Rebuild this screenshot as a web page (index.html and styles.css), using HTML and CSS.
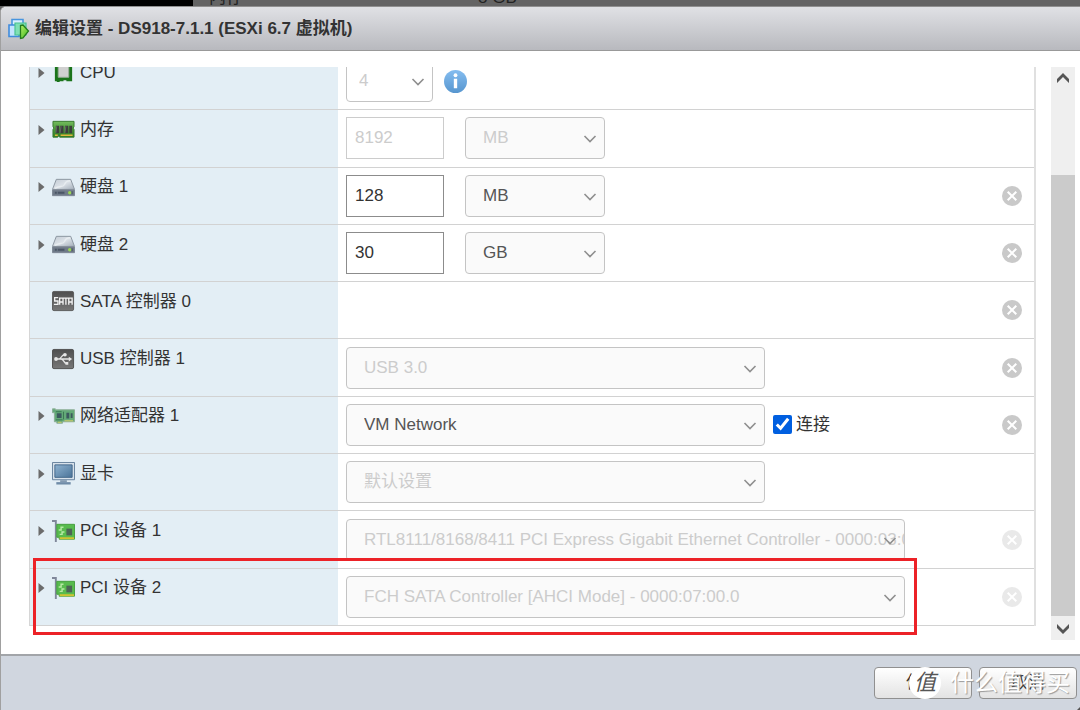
FILE: index.html
```html
<!DOCTYPE html>
<html lang="zh-CN">
<head>
    <meta charset="UTF-8">
    <meta name="viewport" content="width=device-width, initial-scale=1.0">
    <title>编辑设置 - DS918-7.1.1</title>
    <link rel="stylesheet" href="styles.css">
</head>
<body>
    <!-- Shared icons -->
    <svg class="sprite" aria-hidden="true">
        <defs>
            <linearGradient id="disk-fill" x1="0" y1="0" x2="1" y2="1">
                <stop offset="0" stop-color="#c3cbd4"/>
                <stop offset="0.5" stop-color="#dbe1e7"/>
                <stop offset="1" stop-color="#a5afba"/>
            </linearGradient>
            <linearGradient id="dark-fill" x1="0" y1="0" x2="0" y2="1">
                <stop offset="0" stop-color="#4f4f4f"/>
                <stop offset="1" stop-color="#777"/>
            </linearGradient>
            <linearGradient id="ram-fill" x1="0" y1="0" x2="0" y2="1">
                <stop offset="0" stop-color="#74bb5e"/>
                <stop offset="0.5" stop-color="#4c9a3b"/>
                <stop offset="1" stop-color="#2f7d22"/>
            </linearGradient>
            <linearGradient id="screen-fill" x1="0" y1="0" x2="1" y2="1">
                <stop offset="0" stop-color="#8fb3d1"/>
                <stop offset="1" stop-color="#4a7398"/>
            </linearGradient>
            <linearGradient id="info-fill" x1="0" y1="0" x2="0" y2="1">
                <stop offset="0" stop-color="#85bdf0"/>
                <stop offset="1" stop-color="#5796cf"/>
            </linearGradient>
            <linearGradient id="play-fill" x1="0" y1="0" x2="1" y2="1">
                <stop offset="0" stop-color="#b4f06a"/>
                <stop offset="1" stop-color="#3fb81c"/>
            </linearGradient>
        </defs>
        <symbol id="arrow" viewBox="0 0 7 12">
            <path d="M0.5 1v10l6-5z" fill="#6b6b6b"/>
        </symbol>
        <symbol id="chevron" viewBox="0 0 14 10">
            <path d="M1.5 2l5.500 5.500L12.500 2" fill="none" stroke="#8f8f8f" stroke-width="1.600"/>
        </symbol>
        <symbol id="cross" viewBox="0 0 20 20">
            <circle cx="10" cy="10" r="10" fill="#c9c9c9"/>
            <path d="M5.700 5.700l8.600 8.600M14.300 5.700l-8.600 8.600" stroke="#fff" stroke-width="2"/>
        </symbol>
        <symbol id="cpu" viewBox="0 0 24 24">
            <path d="M3 2h18v19h-6v-1h-3v1H8v1H5v-1H3z" fill="#1b741b"/>
            <path d="M6.500 4h11v13h-11z" fill="#d0d0d0"/>
            <path d="M6.500 4h11v13h-11z" fill="none" stroke="#9aae9a"/>
        </symbol>
        <symbol id="ram" viewBox="0 0 24 24">
            <path d="M1 3.500h22V9l-1 1.500 1 1.500V20H8l-1-1.500L6 20H1v-8l1-1.500L1 9z" fill="url(#ram-fill)" stroke="#397a30"/>
            <path d="M4 8h3.500v8H4zM8.500 8H12v8H8.500zM13.500 8H17v8h-3.500zM18 8h3v8h-3z" fill="#3a3f3a"/>
            <path d="M5 8.500l-1 7M9.500 8.500l-1 7M14.500 8.500l-1 7" stroke="#666"/>
            <path d="M3 18h3M9 18h12.500" stroke="#dfb63b" stroke-width="1.600"/>
        </symbol>
        <symbol id="disk" viewBox="0 0 24 24">
            <path d="M4.500 3.500h15L23.500 14H0.500z" fill="url(#disk-fill)" stroke="#8a949f"/>
            <path d="M3 13c5-3 9-1 10-4s3-4 6-4" fill="none" stroke="#eef2f5" stroke-width="1.500" opacity="0.700"/>
            <path d="M0.500 14.500h23v6h-23z" fill="#6f7a88" stroke="#7d8793"/>
            <path d="M3 17.500h2M6 17.500h7" stroke="#4b5665" stroke-width="2"/>
            <circle cx="18.500" cy="17.500" r="1.800" fill="#9ad455"/>
            <path d="M21 16v3" stroke="#47515d"/>
        </symbol>
        <symbol id="sata" viewBox="0 0 24 24">
            <rect x="0.500" y="1.500" width="22" height="20" rx="1.500" fill="url(#dark-fill)" stroke="#5b5b5b"/>
            <path d="M6.500 8H2.800v3.500h3.400V15H2M8 15.500V8.500h3.500v7M8 12.500h3.500M12 8.500h5M14.500 8.500v7M17.500 15.500V8.500H21v7M17.500 12.500H21" fill="none" stroke="#f2f2f2" stroke-width="1.400"/>
        </symbol>
        <symbol id="usb" viewBox="0 0 24 24">
            <rect x="0.500" y="1.500" width="22" height="20" rx="1.500" fill="url(#dark-fill)" stroke="#4f4f4f"/>
            <path d="M4 11.500h14M7 11.500c3 0 2.500-4.500 6-4.500M9.500 11.500c3 0 2.500 4.500 5.500 4.500" fill="none" stroke="#e6e6e6" stroke-width="1.400"/>
            <circle cx="4.200" cy="11.500" r="2" fill="#e6e6e6"/>
            <circle cx="13.500" cy="7" r="1.900" fill="#e6e6e6"/>
            <path d="M17.500 9l3.500 2.500-3.500 2.500zM14 14.500h3v3h-3z" fill="#e6e6e6"/>
        </symbol>
        <symbol id="nic" viewBox="0 0 24 24">
            <path d="M0.500 4h3v1h20v12.500H11V19H5v-1.500H2.500V8h-2z" fill="#63aa78" stroke="#8cae97"/>
            <path d="M5 8.500h5v5H5zM15 8h3v6h-3zM19.500 8.500h2v5h-2z" fill="#3b5a5e"/>
            <path d="M4 7h6M12 7v8M4 15.500h7" stroke="#397651"/>
            <path d="M6 18h4M13 16.500h9" stroke="#d9cf68"/>
        </symbol>
        <symbol id="monitor" viewBox="0 0 24 24">
            <path d="M0.500 0.500h23v18H0.500z" fill="#d7e1ea" stroke="#64809c"/>
            <path d="M3 3h18v13H3z" fill="url(#screen-fill)" stroke="#43678a"/>
            <path d="M8.500 19h7v2h-7z" fill="#8299b0"/>
            <path d="M4.500 21h15v2.500h-15z" fill="#6f8ba7"/>
        </symbol>
        <symbol id="pci" viewBox="0 0 24 24">
            <path d="M0 1h4v22" fill="none" stroke="#80879a" stroke-width="2"/>
            <path d="M5 4.500h18.500V20H7.500v-2H5z" fill="#58bb4e" stroke="#459e3e"/>
            <path d="M15 9h6v7h-6z" fill="#4c6555"/>
            <path d="M12 7.500H9.500v3H7M8 15h2.500v-2.500H13" fill="none" stroke="#b7eaa5" stroke-width="1.500"/>
            <path d="M8 19h15" stroke="#d0c431" stroke-width="2"/>
        </symbol>
    </svg>

    <div class="backdrop">
        <div class="backdrop-nav"></div>
        <span class="backdrop-name">内存</span>
        <span>8 GB</span>
    </div>

    <main class="dialog">
        <header class="dialog-header">
            <svg class="vm-icon" viewBox="0 0 22 22" aria-hidden="true">
                <path d="M4 1.500h11v11H4z" fill="#d8efff" stroke="#4795df" stroke-width="1.600"/>
                <path d="M1 7h10v11.500H1z" fill="#c4e4ff" stroke="#3f8bdc" stroke-width="1.600"/>
                <path d="M7 5h11v12H7z" fill="#7fe0b4" stroke="#49c191" stroke-width="1.200"/>
                <path d="M12.500 7.500l2.500-.5 5.500 6-5.500 7-2.500.5z" fill="url(#play-fill)" stroke="#247c1d" stroke-width="1.300"/>
            </svg>
            <h1>编辑设置 - DS918-7.1.1 (ESXi 6.7 虚拟机)</h1>
        </header>

        <div class="dialog-body">
            <div class="viewport">
                <div class="devices">
                    <div class="device">
                        <div class="device-name">
                            <button class="expand" aria-label="展开"><svg><use href="#arrow"/></svg></button>
                            <svg class="icon"><use href="#cpu"/></svg>
                            <label for="cpu-count">CPU</label>
                        </div>
                        <div class="device-value">
                            <div class="select cpu-select">
                                <select id="cpu-count" disabled><option>4</option></select>
                                <svg class="chevron"><use href="#chevron"/></svg>
                            </div>
                            <svg class="info" viewBox="0 0 24 24">
                                <circle cx="12" cy="12" r="12" fill="url(#info-fill)"/>
                                <circle cx="12" cy="5.500" r="2" fill="#fff"/>
                                <path d="M12 9v10" stroke="#fff" stroke-width="3.500"/>
                            </svg>
                        </div>
                    </div>

                    <div class="device">
                        <div class="device-name">
                            <button class="expand" aria-label="展开"><svg><use href="#arrow"/></svg></button>
                            <svg class="icon"><use href="#ram"/></svg>
                            <label for="memory">内存</label>
                        </div>
                        <div class="device-value">
                            <input class="size" type="text" id="memory" value="8192" disabled>
                            <div class="select unit">
                                <select aria-label="内存单位" disabled><option>MB</option></select>
                                <svg class="chevron"><use href="#chevron"/></svg>
                            </div>
                        </div>
                    </div>

                    <div class="device">
                        <div class="device-name">
                            <button class="expand" aria-label="展开"><svg><use href="#arrow"/></svg></button>
                            <svg class="icon"><use href="#disk"/></svg>
                            <label for="disk1">硬盘 1</label>
                        </div>
                        <div class="device-value">
                            <input class="size" type="text" id="disk1" value="128">
                            <div class="select unit">
                                <select aria-label="硬盘 1 单位"><option>MB</option><option>GB</option></select>
                                <svg class="chevron"><use href="#chevron"/></svg>
                            </div>
                            <button class="remove" aria-label="移除"><svg><use href="#cross"/></svg></button>
                        </div>
                    </div>

                    <div class="device">
                        <div class="device-name">
                            <button class="expand" aria-label="展开"><svg><use href="#arrow"/></svg></button>
                            <svg class="icon"><use href="#disk"/></svg>
                            <label for="disk2">硬盘 2</label>
                        </div>
                        <div class="device-value">
                            <input class="size" type="text" id="disk2" value="30">
                            <div class="select unit">
                                <select aria-label="硬盘 2 单位"><option>GB</option><option>MB</option></select>
                                <svg class="chevron"><use href="#chevron"/></svg>
                            </div>
                            <button class="remove" aria-label="移除"><svg><use href="#cross"/></svg></button>
                        </div>
                    </div>

                    <div class="device">
                        <div class="device-name no-expand">
                            <svg class="icon"><use href="#sata"/></svg>
                            <span>SATA 控制器 0</span>
                        </div>
                        <div class="device-value">
                            <button class="remove" aria-label="移除"><svg><use href="#cross"/></svg></button>
                        </div>
                    </div>

                    <div class="device">
                        <div class="device-name no-expand">
                            <svg class="icon"><use href="#usb"/></svg>
                            <label for="usb-type">USB 控制器 1</label>
                        </div>
                        <div class="device-value">
                            <div class="select wide">
                                <select id="usb-type" disabled><option>USB 3.0</option></select>
                                <svg class="chevron"><use href="#chevron"/></svg>
                            </div>
                            <button class="remove" aria-label="移除"><svg><use href="#cross"/></svg></button>
                        </div>
                    </div>

                    <div class="device">
                        <div class="device-name">
                            <button class="expand" aria-label="展开"><svg><use href="#arrow"/></svg></button>
                            <svg class="icon"><use href="#nic"/></svg>
                            <label for="network">网络适配器 1</label>
                        </div>
                        <div class="device-value">
                            <div class="select wide">
                                <select id="network"><option>VM Network</option></select>
                                <svg class="chevron"><use href="#chevron"/></svg>
                            </div>
                            <label class="connect"><input type="checkbox" checked>连接</label>
                            <button class="remove" aria-label="移除"><svg><use href="#cross"/></svg></button>
                        </div>
                    </div>

                    <div class="device">
                        <div class="device-name">
                            <button class="expand" aria-label="展开"><svg><use href="#arrow"/></svg></button>
                            <svg class="icon"><use href="#monitor"/></svg>
                            <label for="video">显卡</label>
                        </div>
                        <div class="device-value">
                            <div class="select wide">
                                <select id="video" disabled><option>默认设置</option></select>
                                <svg class="chevron"><use href="#chevron"/></svg>
                            </div>
                        </div>
                    </div>

                    <div class="device">
                        <div class="device-name">
                            <button class="expand" aria-label="展开"><svg><use href="#arrow"/></svg></button>
                            <svg class="icon"><use href="#pci"/></svg>
                            <label for="pci1">PCI 设备 1</label>
                        </div>
                        <div class="device-value">
                            <div class="select pci-select">
                                <select id="pci1" disabled><option>RTL8111/8168/8411 PCI Express Gigabit Ethernet Controller - 0000:03:00.0</option></select>
                                <svg class="chevron"><use href="#chevron"/></svg>
                            </div>
                            <button class="remove" aria-label="移除" disabled><svg><use href="#cross"/></svg></button>
                        </div>
                    </div>

                    <div class="device">
                        <div class="device-name">
                            <button class="expand" aria-label="展开"><svg><use href="#arrow"/></svg></button>
                            <svg class="icon"><use href="#pci"/></svg>
                            <label for="pci2">PCI 设备 2</label>
                        </div>
                        <div class="device-value">
                            <div class="select pci-select">
                                <select id="pci2" disabled><option>FCH SATA Controller [AHCI Mode] - 0000:07:00.0</option></select>
                                <svg class="chevron"><use href="#chevron"/></svg>
                            </div>
                            <button class="remove" aria-label="移除" disabled><svg><use href="#cross"/></svg></button>
                        </div>
                        <div class="highlight"></div>
                    </div>
                </div>
            </div>

            <div class="scrollbar">
                <button aria-label="向上滚动"><svg viewBox="0 0 24 24"><path d="M6 16v-4l6-6 6 6v4l-6-6z" fill="#555"/></svg></button>
                <div class="scroll-space"></div>
                <div class="scroll-thumb"></div>
                <button aria-label="向下滚动"><svg viewBox="0 0 24 24"><path d="M6 8v4l6 6 6-6V8l-6 6z" fill="#555"/></svg></button>
            </div>
        </div>

        <footer class="dialog-footer">
            <button class="btn">保存</button>
            <button class="btn">取消</button>
            <div class="watermark">
                <span class="watermark-logo">值</span>
                <span>什么值得买</span>
            </div>
            <svg class="grip" viewBox="0 0 3 3" aria-hidden="true"><path d="M3 0v3H0z" fill="#555"/></svg>
        </footer>
    </main>
</body>
</html>
```
FILE: styles.css
```css
* {
    box-sizing: border-box;
}
body {
    margin: 0;
    height: 100vh;
    display: flex;
    flex-direction: column;
    overflow: hidden;
    background-color: #646464;
    color: #333;
    font-family: "Liberation Sans", Arial, "Noto Sans CJK SC", sans-serif;
    font-size: 17px;
    line-height: 24px;
}
button, input, select {
    margin: 0;
    font: inherit;
    color: inherit;
}
.sprite {
    position: absolute;
    width: 0;
    height: 0;
}

/* Page behind the dialog */
.backdrop {
    display: flex;
    align-items: flex-end;
    height: 6px;
    overflow: hidden;
    color: #222;
    line-height: 16px;
}
.backdrop-nav {
    width: 193px;
    height: 100%;
    margin-right: 16px;
    background-color: #000;
}
.backdrop-name {
    width: 269px;
}

/* Dialog */
.dialog {
    flex: 1;
    min-height: 0;
    display: flex;
    flex-direction: column;
    border-left: 1px solid #a0a0a0;
    border-top: 1px solid #909090;
    border-top-left-radius: 6px;
    background-color: #fff;
    overflow: hidden;
}
.dialog-header {
    display: flex;
    align-items: center;
    gap: 5px;
    height: 44px;
    padding-left: 7px;
    border-bottom: 1px solid #999;
    background: linear-gradient(#e0e1e5, #b8b9be);
}
.vm-icon {
    width: 22px;
    height: 22px;
}
.dialog-header h1 {
    margin: 0;
    font-size: 17px;
}
.dialog-body {
    flex: 1;
    min-height: 0;
    display: flex;
    gap: 15px;
    padding: 16px 5px 14px 28px;
}
.viewport {
    flex: 1;
    overflow: hidden;
}

/* Device list, scrolled down a little */
.devices {
    display: flex;
    flex-direction: column;
    height: 100%;
    margin-top: -14px;
    border-left: 1px solid #d6d6d6;
    border-right: 2px solid #e0e0e0;
}
.device {
    position: relative;
    flex: 1;
    display: flex;
    border-bottom: 1px solid #d2d2d2;
}
.device-name {
    display: flex;
    align-items: center;
    align-self: stretch;
    width: 308px;
    padding: 0 0 17px 8px;
    background-color: #e3eef5;
}
.no-expand {
    padding-left: 22px;
}
.expand {
    display: flex;
    width: 14px;
    padding: 0;
    border: none;
    background: none;
}
.expand svg {
    width: 7px;
    height: 12px;
}
.icon {
    width: 23px;
    height: 23px;
    margin-right: 5px;
}
.device-value {
    flex: 1;
    display: flex;
    align-items: center;
    gap: 8px;
    padding: 0 12px 0 8px;
}
.size {
    width: 98px;
    height: 42px;
    padding: 0 8px;
    border: 1px solid #8c8c8c;
    background-color: #fff;
}
.size:disabled {
    border-color: #ccc;
    color: #ccc;
}
.select {
    position: relative;
}
.select select {
    appearance: none;
    display: block;
    width: 100%;
    height: 42px;
    padding: 0 0 0 17px;
    border: 1px solid #c4c4c4;
    border-radius: 4px;
    background-color: #fafafa;
    color: #555;
}
.select select:disabled {
    opacity: 1;
    color: #ccc;
}
.chevron {
    position: absolute;
    right: 8px;
    top: 17px;
    width: 14px;
    height: 10px;
    pointer-events: none;
}
.cpu-select {
    width: 87px;
    margin-right: 3px;
}
.cpu-select select {
    padding-left: 12px;
    background-color: #fff;
}
.unit {
    width: 140px;
    margin-left: 13px;
}
.wide {
    width: 419px;
}
.pci-select {
    width: 559px;
}
.info {
    width: 23px;
    height: 23px;
}
.connect {
    display: flex;
    align-items: center;
    gap: 4px;
}
.connect input {
    width: 19px;
    height: 19px;
    accent-color: #005fe0;
}
.remove {
    display: flex;
    margin-left: auto;
    padding: 0;
    border: none;
    background: none;
}
.remove svg {
    width: 20px;
    height: 20px;
}
.remove:disabled {
    opacity: 0.4;
}
.highlight {
    position: absolute;
    top: -11px;
    left: 3px;
    width: 884px;
    bottom: -10px;
    border: 3px solid #ec2227;
    pointer-events: none;
}

/* Scrollbar */
.scrollbar {
    display: flex;
    flex-direction: column;
    width: 24px;
    background-color: #efefef;
}
.scrollbar button {
    display: flex;
    width: 24px;
    height: 24px;
    padding: 0;
    border: none;
    background: none;
}
.scroll-space {
    flex: 16;
}
.scroll-thumb {
    flex: 84;
    background-color: #cbcbcb;
}

/* Footer */
.dialog-footer {
    position: relative;
    display: flex;
    justify-content: flex-end;
    align-items: center;
    gap: 7px;
    height: 56px;
    padding-right: 3px;
    border-top: 2px solid #a2a5a9;
    background-color: #d0d6df;
}
.btn {
    width: 98px;
    height: 32px;
    padding: 0;
    border: 1px solid #909090;
    border-radius: 4px;
    background: linear-gradient(#fff, #e3e3e3);
}
.watermark {
    position: absolute;
    right: 10px;
    bottom: 10px;
    display: flex;
    align-items: center;
    gap: 9px;
    color: #fff;
    font-size: 24px;
    line-height: 34px;
    text-shadow: 1px 1px 1px #999;
    pointer-events: none;
}
.watermark-logo {
    width: 32px;
    height: 32px;
    border-radius: 50%;
    background-color: #fff;
    color: #555;
    font-size: 22px;
    font-style: italic;
    line-height: 32px;
    text-align: center;
    text-shadow: none;
}
.grip {
    position: absolute;
    right: 0;
    bottom: 0;
    width: 3px;
    height: 3px;
}
```
